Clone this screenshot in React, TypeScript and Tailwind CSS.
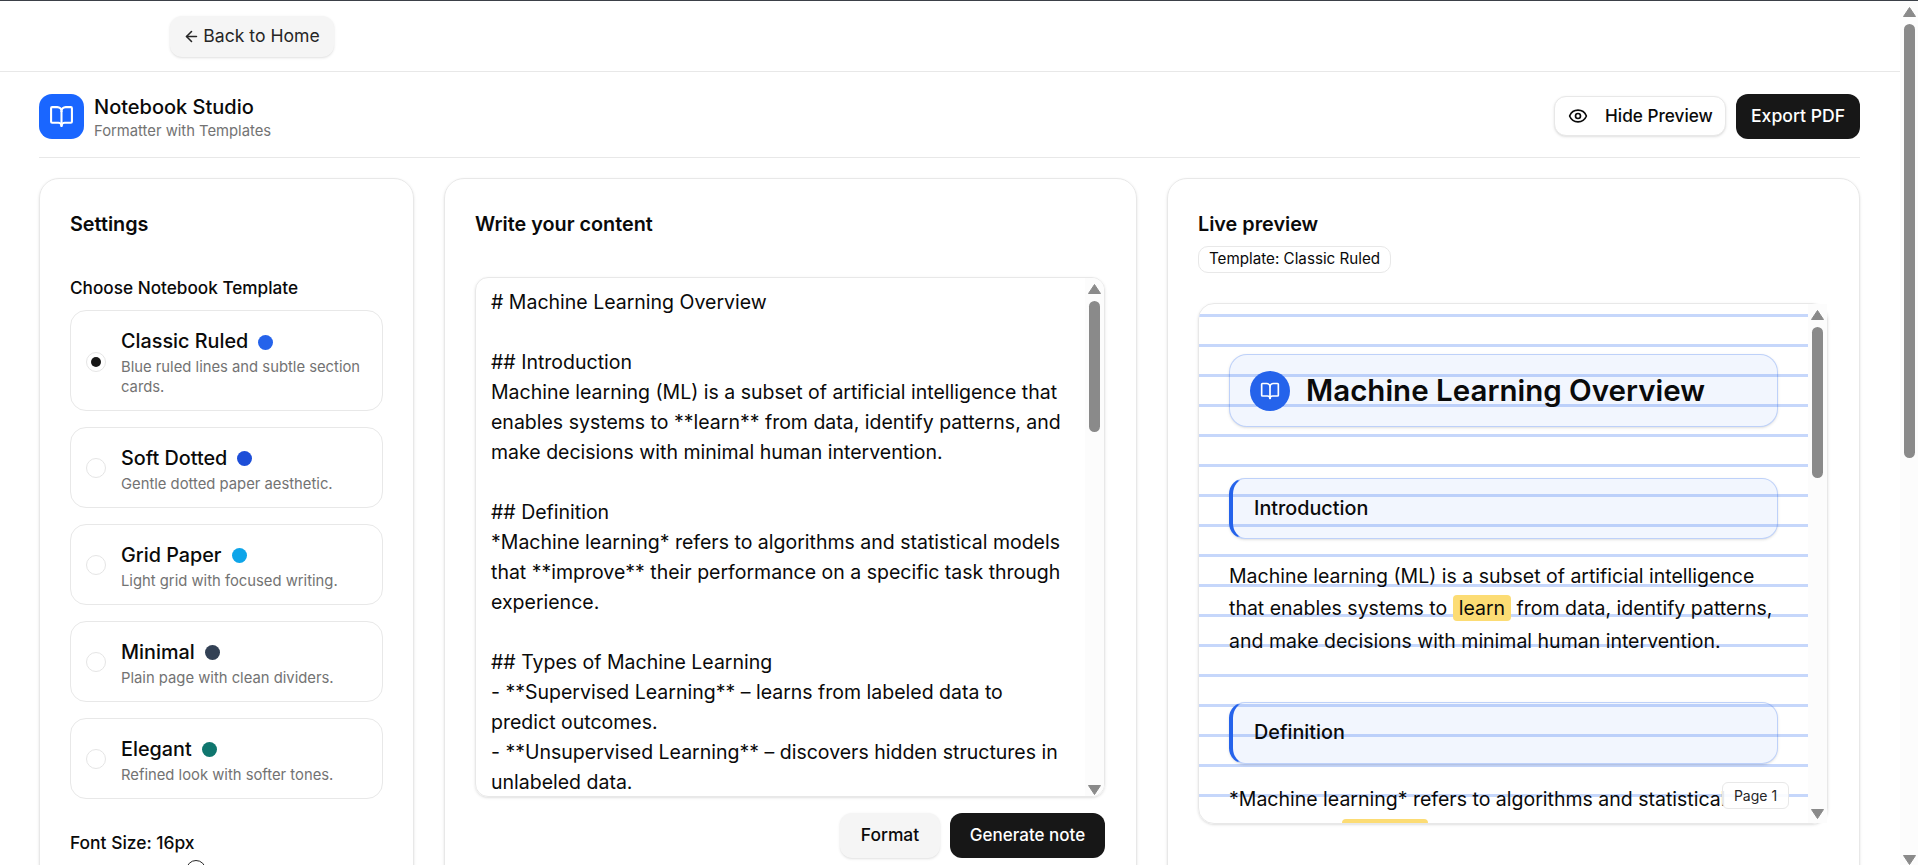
import { ArrowLeft, BookOpen, Eye } from "lucide-react";

const templates = [
  { name: "Classic Ruled", desc: "Blue ruled lines and subtle section cards.", dot: "bg-[#2563eb]", active: true },
  { name: "Soft Dotted", desc: "Gentle dotted paper aesthetic.", dot: "bg-[#1d4ed8]", active: false },
  { name: "Grid Paper", desc: "Light grid with focused writing.", dot: "bg-[#0ea5e9]", active: false },
  { name: "Minimal", desc: "Plain page with clean dividers.", dot: "bg-[#334155]", active: false },
  { name: "Elegant", desc: "Refined look with softer tones.", dot: "bg-[#0f766e]", active: false },
];

const sampleText = `# Machine Learning Overview

## Introduction
Machine learning (ML) is a subset of artificial intelligence that enables systems to **learn** from data, identify patterns, and make decisions with minimal human intervention.

## Definition
*Machine learning* refers to algorithms and statistical models that **improve** their performance on a specific task through experience.

## Types of Machine Learning
- **Supervised Learning** – learns from labeled data to predict outcomes.
- **Unsupervised Learning** – discovers hidden structures in unlabeled data.
- **Reinforcement Learning** – learns through rewards and penalties.`;

function ArrowUp() {
  return (
    <svg width="13" height="10" viewBox="0 0 13 10" className="shrink-0">
      <path d="M6.5 0.5 L12.5 9.5 L0.5 9.5 Z" fill="#8a8a8a" stroke="#8a8a8a" strokeLinejoin="round" />
    </svg>
  );
}

function ArrowDown() {
  return (
    <svg width="13" height="10" viewBox="0 0 13 10" className="shrink-0">
      <path d="M0.5 0.5 L12.5 0.5 L6.5 9.5 Z" fill="#8a8a8a" stroke="#8a8a8a" strokeLinejoin="round" />
    </svg>
  );
}

// drawn scrollbar, the native one doesn't show up in the shot
function Scrollbar({ width, thumb, top, gap }: { width: string; thumb: string; top: string; gap: string }) {
  return (
    <div className={`flex h-full shrink-0 flex-col items-center justify-between bg-[#fcfcfc] ${width} ${top}`}>
      <div className="flex flex-col items-center">
        <ArrowUp />
        <div className={`w-[11px] rounded-full bg-[#8a8a8a] ${gap} ${thumb}`} />
      </div>
      <ArrowDown />
    </div>
  );
}

function TemplateOption({ name, desc, dot, active }: (typeof templates)[number]) {
  return (
    <div className="flex items-center gap-[15px] rounded-[16px] border border-[#e8e8e8] bg-white px-[15px] pb-[13px] pt-[15px]">
      <div className="flex size-5 shrink-0 items-center justify-center rounded-full border border-[#e5e5e5] bg-white">
        {active && <div className="size-[10px] rounded-full bg-[#171717]" />}
      </div>
      <div className="min-w-0 flex-1">
        <div className="flex h-[32px] items-center gap-[10px]">
          <span className="text-[19.8px] font-medium text-[#0a0a0a]">{name}</span>
          <span className={`size-[15px] rounded-full ${dot}`} />
        </div>
        <p className="text-[14.8px] leading-[19.5px] text-[#737373]">{desc}</p>
      </div>
    </div>
  );
}

function SectionTitle({ children, className }: { children: string; className: string }) {
  return (
    <div className={`flex items-center rounded-[16px] border border-[#2563eb]/25 border-l-4 border-l-[#2563eb] bg-[#2563eb]/[0.06] pl-[21px] text-[19.8px] font-medium text-[#0a0a0a] shadow-sm ${className}`}>
      {children}
    </div>
  );
}

export default function App() {
  return (
    <div className="flex h-[865px] overflow-hidden border-t border-t-[#3b4048] bg-white font-['Inter',sans-serif] text-[#0a0a0a]">
      <div className="min-w-0 flex-1">
        <div className="flex h-[71px] items-start border-b border-[#e8e8e8] pl-[170px] pt-[15px]">
          <button className="flex h-[41px] w-[164px] items-center justify-center gap-[3px] rounded-[12px] bg-[#f5f5f5] pr-[1px] text-[17.6px] text-[#262626] shadow-sm">
            <ArrowLeft size={17} strokeWidth={2.25} />
            Back to Home
          </button>
        </div>

        <div className="pl-[39px] pr-10">
          <header className="flex h-[86px] items-center justify-between border-b border-[#e8e8e8] pt-[3px]">
            <div className="flex items-center gap-[10px]">
              <div className="flex size-[45px] items-center justify-center rounded-[13px] bg-[#1a66ff] text-white">
                <BookOpen size={25} strokeWidth={2} />
              </div>
              <div className="pt-[4px]">
                <div className="text-[20px] font-medium leading-[27px] text-[#0a0a0a]">Notebook Studio</div>
                <div className="text-[14.8px] leading-[21px] text-[#737373]">Formatter with Templates</div>
              </div>
            </div>
            <div className="flex items-center gap-[10px]">
              <button className="flex h-10 w-[172px] items-center gap-[17px] rounded-[12px] border border-[#e8e8e8] bg-white pl-[13px] text-[17.2px] font-medium shadow-sm">
                <Eye size={20} />
                Hide Preview
              </button>
              <button className="h-[45px] w-[124px] rounded-[12px] bg-[#171717] text-[17.6px] font-medium text-white">
                Export PDF
              </button>
            </div>
          </header>

          <div className="mt-[20px] grid grid-cols-[375px_1fr_1fr] gap-[30px]">
            <section className="h-[900px] rounded-[20px] border border-[#e8e8e8] px-[30px] pt-[30px] shadow-sm">
              <h2 className="text-[19.8px] font-semibold leading-[30px]">Settings</h2>
              <h3 className="mt-[37px] text-[17.2px] font-medium leading-[24px]">Choose Notebook Template</h3>
              <div className="mt-[10px] flex flex-col gap-[15.5px]">
                {templates.map((t) => (
                  <TemplateOption key={t.name} {...t} />
                ))}
              </div>
              <div className="mt-[32px] text-[17.4px] font-medium leading-[24px]">Font Size: 16px</div>
              <div className="ml-[116px] mt-[5px] size-5 rounded-full border border-[#262626] bg-white" />
            </section>

            <section className="h-[900px] rounded-[20px] border border-[#e8e8e8] pl-[30px] pr-[31px] pt-[30px] shadow-sm">
              <h2 className="text-[19.8px] font-semibold leading-[30px]">Write your content</h2>
              <div className="mt-[38px] flex h-[520px] overflow-hidden rounded-[13px] border border-[#e8e8e8] shadow-sm">
                <textarea
                  readOnly
                  defaultValue={sampleText}
                  className="min-w-0 flex-1 resize-none overflow-hidden py-[9px] pl-[15px] pr-[23px] text-[19.5px] leading-[30px] outline-none"
                />
                <Scrollbar width="w-[19px]" top="pt-[6px] pb-[1px]" gap="mt-[7px]" thumb="h-[131px]" />
              </div>
              <div className="mt-[16px] flex justify-end gap-[10px]">
                <button className="h-[45px] w-[100px] rounded-[12px] bg-[#f5f5f5] text-[17.4px] font-medium shadow-sm">Format</button>
                <button className="h-[45px] w-[155px] rounded-[12px] bg-[#171717] text-[17px] font-medium text-white">Generate note</button>
              </div>
            </section>

            <section className="h-[900px] rounded-[20px] border border-[#e8e8e8] pl-[30px] pr-[31px] pt-[30px] shadow-sm">
              <h2 className="text-[19.8px] font-semibold leading-[30px]">Live preview</h2>
              <div className="mt-[7px] inline-flex h-[27px] items-center rounded-[10px] border border-[#e8e8e8] px-[10px] text-[15.2px]">
                Template: Classic Ruled
              </div>
              <div className="relative mt-[30px] flex h-[521px] rounded-[16px] border border-[#e8e8e8] shadow-sm">
                <div className="min-w-0 flex-1 overflow-hidden rounded-l-[15px] bg-[repeating-linear-gradient(to_bottom,transparent_0,transparent_10px,#c6d7fb_10px,#c6d7fb_13px,transparent_13px,transparent_30px)] px-[30px] pt-[50px]">
                  <div className="flex h-[73px] items-center gap-[16px] rounded-[18px] border border-[#2563eb]/25 bg-[#2563eb]/[0.06] pl-[20px] shadow-sm">
                    <div className="flex size-10 items-center justify-center rounded-full bg-[#2563eb] text-white">
                      <BookOpen size={20} />
                    </div>
                    <h1 className="text-[29.5px] font-semibold leading-none">Machine Learning Overview</h1>
                  </div>
                  <SectionTitle className="mt-[51px] h-[61px]">Introduction</SectionTitle>
                  <p className="mt-[21px] text-[19.5px] leading-[32.4px]">
                    Machine learning (ML) is a subset of artificial intelligence that enables systems to{" "}
                    <span className="rounded-[4px] bg-[#fcdc74] px-[6px] py-[1px]">learn</span> from data, identify patterns, and make decisions with minimal human intervention.
                  </p>
                  <SectionTitle className="mt-[45px] h-[62px]">Definition</SectionTitle>
                  <p className="mt-[19px] text-[19.5px] leading-[32.4px]">
                    *Machine learning* refers to algorithms and statistical models that{" "}
                    <span className="rounded-[4px] bg-[#fcdc74] px-[6px] py-[1px]">improve</span> their performance on a specific task through experience.
                  </p>
                </div>
                <Scrollbar width="w-[19px]" top="pt-[6px] pb-[4px]" gap="mt-[7px]" thumb="h-[151px]" />
                <div className="absolute left-[523px] top-[478px] flex h-[27px] w-[67px] items-center justify-center rounded-[6px] border border-[#e8e8e8] bg-white/90 text-[14px] text-[#262626]">
                  Page 1
                </div>
              </div>
            </section>
          </div>
        </div>
      </div>

      <Scrollbar width="w-[18px]" top="pt-[6px]" gap="mt-[7px]" thumb="h-[434px]" />
    </div>
  );
}
